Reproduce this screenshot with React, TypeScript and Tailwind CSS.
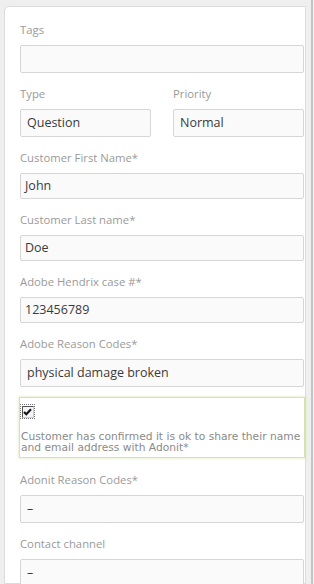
import React from "react";

const labelCls =
  "block h-[16px] leading-[16px] text-[11.3px] text-[#9a9a9a] mb-[7px] whitespace-nowrap";
const selectCls =
  "h-[28px] border border-[#d6d6d6] rounded-[2px] bg-[#fafafa] pl-[6px] flex items-center text-[12.5px] text-[#3a3a3a]";
const inputCls =
  "h-[26px] border border-[#d6d6d6] rounded-[2px] bg-[#fafafa] pl-[4px] flex items-center text-[12.5px] text-[#3a3a3a]";

function Field({
  label,
  value,
  select,
  className = "",
}: {
  label: string;
  value?: string;
  select?: boolean;
  className?: string;
}) {
  return (
    <div className={"mb-[13px] " + className}>
      <div className={labelCls}>{label}</div>
      <div className={select ? selectCls : inputCls}>{value}</div>
    </div>
  );
}

export default function App() {
  return (
    <div
      className="w-[314px] h-[584px] overflow-hidden bg-[#efefef] flex"
      style={{ fontFamily: '"Open Sans", "DejaVu Sans", sans-serif' }}
    >
      <div className="ml-[4px] mt-[6px] w-[302px] shrink-0 bg-white border border-[#dcdcdc] rounded-tl-[5px] pl-[15px] pr-[1px] pt-[15px]">
        <Field label="Tags" value="" select />
        <div className="flex gap-[22px]">
          <Field label="Type" value="Question" select className="w-[131px]" />
          <Field label="Priority" value="Normal" select className="flex-1" />
        </div>
        <Field label="Customer First Name*" value="John" />
        <Field label="Customer Last name*" value="Doe" />
        <Field label="Adobe Hendrix case #*" value="123456789" />
        <Field label="Adobe Reason Codes*" value="physical damage broken" select className="!mb-[10px]" />
        <div className="-ml-[1px] w-[286px] h-[61px] border border-[#d6e3b0] shadow-[0_0_3px_rgba(190,215,130,0.6)] bg-white pt-[7px] mb-[14px]">
          <div className="ml-[1px] w-[13px] h-[13px] outline-1 outline-dotted outline-[#777] flex items-center justify-center">
            <div className="w-[12px] h-[12px] border border-t-[#555] border-l-[#555] border-r-[#ccc] border-b-[#ccc] bg-[#f4f4f4] flex items-center justify-center">
              <svg width="9" height="8" viewBox="0 0 9 8">
                <path d="M1 4 L3.3 6.3 L8 1.2" stroke="#111" strokeWidth="2" fill="none" />
              </svg>
            </div>
          </div>
          <div
            className="ml-[1px] mt-[13px] text-[10.7px] leading-[11px] text-[#8a8a8a]"
            style={{ fontFamily: '"DejaVu Sans", sans-serif' }}
          >
            Customer has confirmed it is ok to share their name and email address with Adonit*
          </div>
        </div>
        <Field label="Adonit Reason Codes*" value="–" select />
        <Field label="Contact channel" value="–" select />
      </div>
      <div className="w-[5px] shrink-0" />
      <div className="w-[2px] shrink-0 bg-[#c4c4c4]" />
      <div className="flex-1 bg-[#f4f4f4]" />
    </div>
  );
}
